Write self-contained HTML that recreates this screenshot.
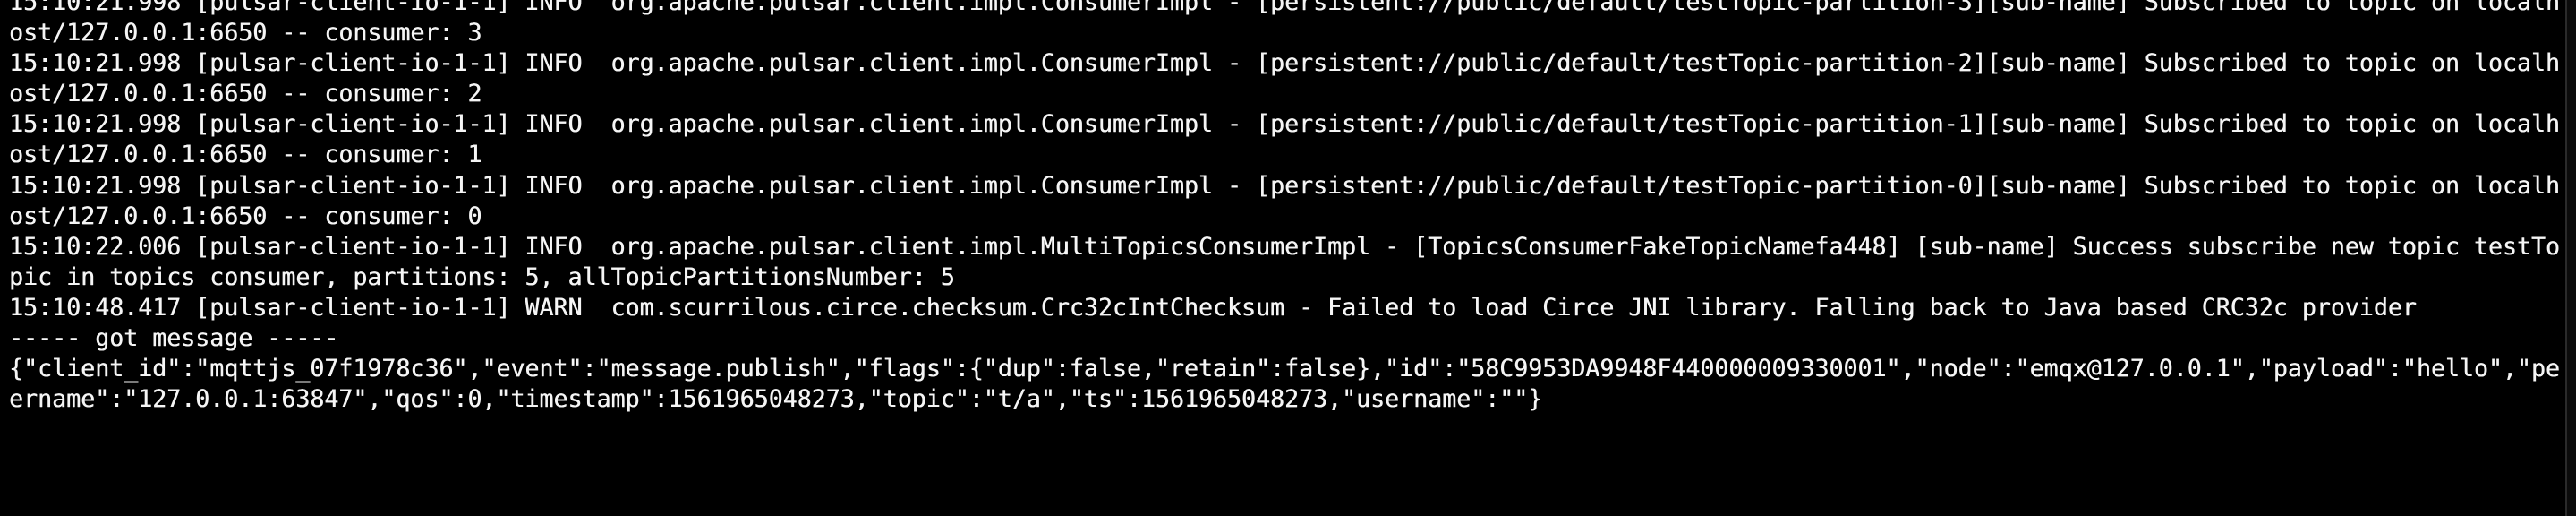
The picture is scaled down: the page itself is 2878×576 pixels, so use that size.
<!DOCTYPE html>
<html><head><meta charset="utf-8"><style>
html,body{margin:0;padding:0;background:#000;width:2878px;height:576px;overflow:hidden;}
pre{position:absolute;left:10px;top:-14px;margin:0;font-family:"DejaVu Sans Mono","Liberation Mono",monospace;font-size:26.6px;line-height:34.1px;color:#f5f5f5;white-space:pre;text-shadow:0.4px 0 0 #f5f5f5;}
.sb{position:absolute;right:0;top:0;width:10px;height:576px;background:#0b0b0b;border-left:2px solid #2a2a2a;}
</style></head><body>
<pre>15:10:21.998 [pulsar-client-io-1-1] INFO  org.apache.pulsar.client.impl.ConsumerImpl - [persistent://public/default/testTopic-partition-3][sub-name] Subscribed to topic on localh
ost/127.0.0.1:6650 -- consumer: 3
15:10:21.998 [pulsar-client-io-1-1] INFO  org.apache.pulsar.client.impl.ConsumerImpl - [persistent://public/default/testTopic-partition-2][sub-name] Subscribed to topic on localh
ost/127.0.0.1:6650 -- consumer: 2
15:10:21.998 [pulsar-client-io-1-1] INFO  org.apache.pulsar.client.impl.ConsumerImpl - [persistent://public/default/testTopic-partition-1][sub-name] Subscribed to topic on localh
ost/127.0.0.1:6650 -- consumer: 1
15:10:21.998 [pulsar-client-io-1-1] INFO  org.apache.pulsar.client.impl.ConsumerImpl - [persistent://public/default/testTopic-partition-0][sub-name] Subscribed to topic on localh
ost/127.0.0.1:6650 -- consumer: 0
15:10:22.006 [pulsar-client-io-1-1] INFO  org.apache.pulsar.client.impl.MultiTopicsConsumerImpl - [TopicsConsumerFakeTopicNamefa448] [sub-name] Success subscribe new topic testTo
pic in topics consumer, partitions: 5, allTopicPartitionsNumber: 5
15:10:48.417 [pulsar-client-io-1-1] WARN  com.scurrilous.circe.checksum.Crc32cIntChecksum - Failed to load Circe JNI library. Falling back to Java based CRC32c provider
----- got message -----
{"client_id":"mqttjs_07f1978c36","event":"message.publish","flags":{"dup":false,"retain":false},"id":"58C9953DA9948F440000009330001","node":"emqx@127.0.0.1","payload":"hello","pe
ername":"127.0.0.1:63847","qos":0,"timestamp":1561965048273,"topic":"t/a","ts":1561965048273,"username":""}</pre>
<div class="sb"></div>
</body></html>
